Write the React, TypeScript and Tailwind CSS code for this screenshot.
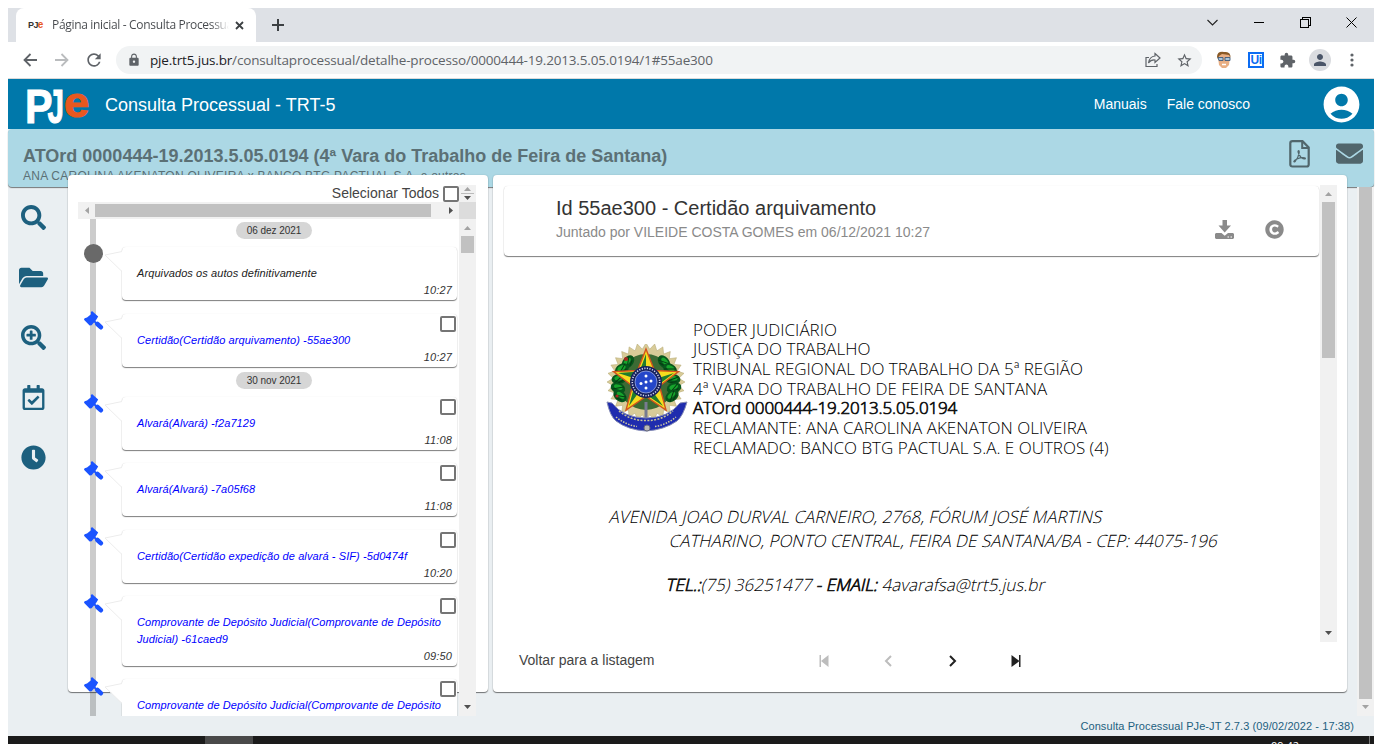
import React from "react";
import {
  FaSearch, FaFolderOpen, FaSearchPlus, FaRegCalendarCheck, FaClock,
  FaCopyright, FaEnvelope,
} from "react-icons/fa";
import { MdAccountCircle, MdLock, MdExtension, MdPerson, MdStarBorder, MdRefresh } from "react-icons/md";

const arial = "font-['Liberation_Sans',Arial,sans-serif]";
const segoe = "font-['Open_Sans','Noto_Sans',sans-serif]";
const doc = "font-['Open_Sans',sans-serif]";

type Entry = { title: string; time: string; plain?: boolean; tall?: boolean };

const december: Entry[] = [
  { title: "Arquivados os autos definitivamente", time: "10:27", plain: true },
  { title: "Certidão(Certidão arquivamento) -55ae300", time: "10:27" },
];
const november: Entry[] = [
  { title: "Alvará(Alvará) -f2a7129", time: "11:08" },
  { title: "Alvará(Alvará) -7a05f68", time: "11:08" },
  { title: "Certidão(Certidão expedição de alvará - SIF) -5d0474f", time: "10:20" },
  { title: "Comprovante de Depósito Judicial(Comprovante de Depósito\nJudicial) -61caed9", time: "09:50", tall: true },
  { title: "Comprovante de Depósito Judicial(Comprovante de Depósito", time: "", tall: true },
];

function Arrow({ dir, dim = false }: { dir: "up" | "down" | "left" | "right"; dim?: boolean }) {
  const d = {
    up: "M0 4 L3.5 0 L7 4Z",
    down: "M0 0 L7 0 L3.5 4Z",
    left: "M4 0 L0 3.5 L4 7Z",
    right: "M0 0 L4 3.5 L0 7Z",
  }[dir];
  const vertical = dir === "up" || dir === "down";
  return (
    <svg width={vertical ? 7 : 4} height={vertical ? 4 : 7} className={dim ? "fill-[#a3a3a3]" : "fill-[#505050]"}>
      <path d={d} />
    </svg>
  );
}

function PjeLogo() {
  return (
    <svg width="66" height="50" viewBox="0 0 66 50" className="overflow-visible font-['Liberation_Sans',Arial,sans-serif] font-bold">
      <g transform="translate(-3 44.3) scale(0.86 1)">
        <text fontSize="48" fill="#fff" stroke="#fff" strokeWidth="1">P</text>
      </g>
      <g transform="translate(19.5 44.3) scale(0.62 1)">
        <text fontSize="48" fill="#fff" stroke="#fff" strokeWidth="1">J</text>
      </g>
      <g transform="translate(36 38) scale(1.03 0.98)">
        <text fontSize="44" fill="#e8581f" stroke="#e8581f" strokeWidth="1.2">e</text>
      </g>
    </svg>
  );
}

function TabStrip() {
  return (
    <div className="flex h-[34px] shrink-0 bg-[#dee1e6]">
      <div className="ml-2 flex w-60 items-center rounded-t-lg bg-white pl-3 pr-3">
        <span className="w-4 shrink-0 font-['Liberation_Sans',Arial,sans-serif] text-[9px] font-bold tracking-[-0.6px] text-[#333]">
          PJ<span className="text-[10px] text-[#e8581f]">e</span>
        </span>
        <span className={`${segoe} ml-2 w-[177px] overflow-hidden whitespace-nowrap bg-linear-to-r from-[#45484c] from-90% to-transparent bg-clip-text text-[12px] tracking-[-0.32px] text-transparent`}>
          Página inicial - Consulta Processual
        </span>
        <svg width="9" height="9" className="ml-[6px] shrink-0" stroke="#3c4043" strokeWidth="1.8"><path d="M1 1L8 8M8 1L1 8" /></svg>
      </div>
      <svg width="12" height="12" className="ml-4 mt-[11px]" stroke="#3c4043" strokeWidth="2"><path d="M6 0V12M0 6H12" /></svg>
      <div className="flex flex-1 justify-end pt-[8px] text-[#111]">
        <div className="flex h-3 items-center">
          <svg width="11" height="7" fill="none" stroke="#222" strokeWidth="1.1"><path d="M.5 1L5.5 6L10.5 1" /></svg>
          <svg width="10" height="2" className="ml-9"><path d="M0 1H10" stroke="#000" strokeWidth="1" shapeRendering="crispEdges" /></svg>
          <svg width="11" height="11" className="ml-9" fill="none" stroke="#000" shapeRendering="crispEdges"><path d="M.5 2.5H8.5V10.5H.5ZM2.5 2.5V.5H10.5V8.5H8.5" /></svg>
          <svg width="11" height="11" className="ml-[35px] mr-[17px]" stroke="#000"><path d="M.5 .5L10.5 10.5M10.5 .5L.5 10.5" /></svg>
        </div>
      </div>
    </div>
  );
}

function Toolbar() {
  return (
    <div className="flex h-[37px] shrink-0 items-center border-b border-[#dadada] bg-white pl-[15px] text-[#5f6368]">
      <svg width="14" height="14" fill="none" stroke="#5f6368" strokeWidth="1.8"><path d="M14 7H1.5M7.5 1L1.5 7L7.5 13" /></svg>
      <svg width="14" height="14" className="ml-[18px]" fill="none" stroke="#babcbe" strokeWidth="1.8"><path d="M0 7H12.5M6.5 1L12.5 7L6.5 13" /></svg>
      <MdRefresh className="ml-[15px] size-5" />
      <div className="ml-[12px] flex h-7 w-[1086px] items-center rounded-full bg-[#f1f3f4] pl-[11px] pr-[9px]">
        <MdLock className="size-[14px]" />
        <span className={`${segoe} ml-[9px] flex-1 whitespace-nowrap text-[13.5px] tracking-[-0.17px]`}>
          <span className="text-[#202124]">pje.trt5.jus.br</span>/consultaprocessual/detalhe-processo/0000444-19.2013.5.05.0194/1#55ae300
        </span>
        <svg width="16" height="16" fill="none" stroke="#5f6368" strokeWidth="1.2">
          <path d="M4 5.5H1V14.5H12V12M10 1.5L15 6L10 10.5V8Q6 7.5 3.5 11Q4.5 4.5 10 4Z" />
        </svg>
        <MdStarBorder className="ml-[15px] size-[17px]" />
      </div>
      <svg width="14" height="18" className="ml-[15px] shrink-0">
        <path d="M1 6Q1 1 7 1Q13 1 13 6L12 14L9 17H5L2 14Z" fill="#e8ae83" />
        <path d="M0 6Q0 0 7 1Q14 0 13.5 7L12 4L5 3L2 5L1 8Z" fill="#8a5a26" />
        <path d="M1 6.5H6V9.5H2ZM8 6.5H13V9.5H8Z" fill="#a9c6da" stroke="#3d5a7c" strokeWidth=".9" />
        <path d="M5 13.5H9" stroke="#fff" strokeWidth="1.5" />
      </svg>
      <span className={`${arial} ml-[17px] flex h-4 w-4 shrink-0 items-center justify-center border-2 border-[#0c6cf2] bg-white text-[12px] font-bold leading-none tracking-[-0.4px] text-[#0c6cf2]`}>Ui</span>
      <MdExtension className="ml-[15px] size-[17px] shrink-0" />
      <span className="ml-[13px] flex size-[22px] shrink-0 items-center justify-center rounded-full bg-[#dadce0]">
        <MdPerson className="size-[18px] text-[#4a5568]" />
      </span>
      <svg width="4" height="14" className="ml-[19px] shrink-0 fill-[#5f6368]"><circle cx="2" cy="2" r="1.6" /><circle cx="2" cy="7" r="1.6" /><circle cx="2" cy="12" r="1.6" /></svg>
    </div>
  );
}

function Checkbox() {
  return <span className="block size-4 rounded-[2px] border-2 border-[#757575] bg-white" />;
}

function Gavel() {
  return (
    <svg width="20" height="19" className="-ml-[0.5px] -mr-[0.5px] -mt-[2.5px]" fill="#1a53ff">
      <path d="M8 0L14.2 5.6L12.4 8.6L7.6 14.2L5.6 14.6L0 8.8L.6 7.2L3 6.6L7 3.2L6.8 1.2Z" />
      <path d="M9.5 9.5L12.5 12.5" stroke="#1a53ff" strokeWidth="1.8" />
      <path d="M13.4 13L16.8 16.2" stroke="#1a53ff" strokeWidth="4.6" strokeLinecap="round" />
    </svg>
  );
}

function FilePdf() {
  return (
    <svg width="21" height="28" className="mr-[26px] mt-[11px]" fill="none" stroke="#51666c">
      <path d="M3.5 1.2H13.5L19.7 7.5V24.5Q19.7 26.5 17.7 26.5H3.5Q1.3 26.5 1.3 24.5V3.2Q1.3 1.2 3.5 1.2Z" strokeWidth="2.2" />
      <path d="M13.2 1.5V8H19.5" strokeWidth="2" />
      <path d="M9.3 10.8Q10.4 10.4 10.2 12.6Q9.5 17 6.5 21Q5.2 22.6 4.8 21.6Q4.8 20.3 8 19Q12 17.3 15.5 17.8Q17 18.2 16 18.9Q14.8 19.4 12 17.2Q9.5 15 9.1 12.2Q8.8 11 9.3 10.8Z" strokeWidth="1.2" />
    </svg>
  );
}

function DatePill({ children }: { children: string }) {
  return (
    <div className="ml-[158px] flex h-[17px] w-[76px] items-center justify-center rounded-full bg-[#d6d6d6] text-[10px] tracking-[-0.05px] text-[#333]">
      {children}
    </div>
  );
}

function TimelineItem({ title, time, plain, tall }: Entry) {
  return (
    <div className="mb-[13.25px] flex items-start pl-[6px]">
      {plain ? <span className="-mt-[3px] size-[19px] rounded-full bg-[#696969]" /> : <Gavel />}
      <svg width="18" height="21" className="z-10 -mr-px ml-[2px] mt-[4px]">
        <path d="M17 0L0 4L17 20Z" fill="#fff" />
        <path d="M17 .5L0 4L17 20.5" fill="none" stroke="#ececec" />
      </svg>
      <div className={`relative w-[335px] rounded bg-white pt-[18px] text-[11px] italic leading-[17px] shadow-[0_1px_1px_rgba(0,0,0,0.5),0_0_1px_rgba(0,0,0,0.14)] ${tall ? "h-[69.75px]" : "h-[53.25px]"}`}>
        <p className={`whitespace-pre pl-[15px] tracking-[0.09px] ${plain ? "text-[#222]" : "text-[#0000ff]"}`}>{title}</p>
        <p className="pr-[5px] text-right text-[#333] tracking-[0.16px]">{time}</p>
        {!plain && <span className="absolute right-px top-[2.3px]"><Checkbox /></span>}
      </div>
    </div>
  );
}

function TimelinePanel() {
  return (
    <section className="h-[517px] w-[420px] shrink-0 rounded bg-white pl-[10px] pt-[10px] shadow-[0_1px_1px_rgba(0,0,0,0.5),0_0_2px_rgba(0,0,0,0.14)]">
      <div className="flex h-[17px] w-[398px] items-center">
        <span className="ml-auto mr-1 text-[14px] text-[#444]">Selecionar Todos</span>
        <span className="mt-px"><Checkbox /></span>
        <div className="flex h-[17px] w-[17px] flex-col items-center justify-center bg-[#f1f1f1]">
          <Arrow dir="up" dim />
          <span className="my-[2px] h-px w-[13px] bg-[#bbb]" />
          <Arrow dir="down" />
        </div>
      </div>
      <div className="flex h-[17px] w-[398px] bg-[#f1f1f1]">
        <span className="flex w-[17px] items-center justify-center"><Arrow dir="left" dim /></span>
        <span className="mt-[2px] h-[13px] w-[336px] bg-[#c1c1c1]" />
        <span className="flex flex-1 items-center justify-center pl-[11px]"><Arrow dir="right" /></span>
        <span className="w-[17px] bg-[#dcdcdc]" />
      </div>
      <div className="flex h-[497px] w-[398px] overflow-hidden">
        <div className="relative w-[381px]">
          <span className="absolute left-3 top-0 h-full w-[6px] bg-black/20" />
          <div className="relative pt-[3px]">
            <DatePill>06 dez 2021</DatePill>
            <div className="pt-[8px]">{december.map((e, i) => <TimelineItem key={i} {...e} />)}</div>
            <div className="-mt-[8px]"><DatePill>30 nov 2021</DatePill></div>
            <div className="pt-[7.5px]">{november.map((e, i) => <TimelineItem key={i} {...e} />)}</div>
          </div>
        </div>
        <div className="flex w-[17px] flex-col items-center bg-[#f1f1f1]">
          <span className="flex h-[17px] items-center"><Arrow dir="up" dim /></span>
          <span className="h-[17px] w-[13px] bg-[#c1c1c1]" />
          <span className="mb-[7px] mt-auto"><Arrow dir="down" /></span>
        </div>
      </div>
    </section>
  );
}

const leaves = [
  [-18, -20, -50], [-24, -13, -30], [-27, -3, -10], [-28, 6, 20], [-26, 14, 40],
  [18, -20, 50], [24, -13, 30], [27, -3, 10], [28, 6, -20], [26, 14, -40],
];

function CoatOfArms() {
  const rays = Array.from({ length: 56 }, (_, i) => {
    const r = i % 2 ? 33 : 39;
    const a = (i * Math.PI) / 28;
    return `${(Math.sin(a) * r).toFixed(1)},${(-Math.cos(a) * r).toFixed(1)}`;
  }).join(" ");
  return (
    <svg width="82" height="90" viewBox="-40 -38 82 90" className="shrink-0">
      <polygon points={rays} fill="#d8cb98" stroke="#b0a56c" strokeWidth=".5" />
      <circle r="28" fill="#3c6b34" />
      {leaves.map(([x, y, a], i) => (
        <g key={i} transform={`translate(${x} ${y}) rotate(${a})`}>
          <ellipse rx="7.5" ry="5.2" fill="#07571c" />
          <ellipse rx="4.5" ry="2.4" cy="-1" fill="#17a52c" />
          <path d="M-5 3L5 -3M-2 4L4 2" stroke="#063a12" />
        </g>
      ))}
      <circle cx="-20" cy="-23" r="2" fill="#a52a20" />
      <circle cx="-29" cy="14" r="1.6" fill="#a52a20" />
      <path d="M-1.5 20H1.5V44H-1.5Z" fill="#777b91" />
      <path d="M-39 20L-34 21Q-22 36 0 36Q22 36 34 21L41 20Q37 34 31 39Q18 48 0 49Q-18 48 -30 39Q-36 34 -39 20Z" fill="#1f2cae" stroke="#8289b5" />
      <path d="M-27 29Q-15 39 0 38.5Q15 39 27 29" stroke="#c7c49a" strokeWidth="1.5" strokeDasharray="2 1.4" fill="none" />
      <path d="M-30 35Q-20 43 -9 44.5M9 44.5Q20 43 30 35" stroke="#d3cda0" strokeWidth="1.5" strokeDasharray="1.5 1.3" fill="none" />
      <path d="M0 -33L8.4 -11.5L32.5 -10.5L13.5 4L20 28L0 14.5L-20 28L-13.5 4L-32.5 -10.5L-8.4 -11.5Z" fill="#f6dc1e" stroke="#d3541d" strokeWidth="1.4" />
      <path d="M0 -28V0L-6.5 -10.5ZM28 -9L0 0L11.5 3.5ZM17 24L0 0V12.5ZM-17 24L0 0L-11.5 3.5ZM-28 -9L0 0L-6.5 -10.5Z" fill="#207c2d" />
      <circle r="16" fill="#16205d" />
      <circle r="13.7" fill="none" stroke="#d5d8ed" strokeWidth="1.6" strokeDasharray="1.2 1.4" />
      <circle r="11" fill="#2446c9" stroke="#aeb9e8" strokeWidth=".7" />
      <g fill="#fff"><circle cy="-6" r="1.5" /><circle cy="0" r="1.5" /><circle cy="6" r="1.5" /><circle cx="-5" cy="1.5" r="1.5" /><circle cx="5" cy="-1" r="1.5" /></g>
      <circle cx="1" cy="46" r="3" fill="#b9b8b6" stroke="#686b7c" />
    </svg>
  );
}

function DocumentPanel() {
  return (
    <section className="ml-[5px] h-[517px] w-[854px] shrink-0 rounded bg-white pl-[10px] pt-[10px] shadow-[0_1px_1px_rgba(0,0,0,0.5),0_0_2px_rgba(0,0,0,0.14)]">
      <div className="flex h-[457px]">
        <div className="w-[817px] pt-px">
          <header className="ml-[1px] flex h-[70px] w-[815px] rounded pl-[52px] shadow-[0_1px_1px_rgba(0,0,0,0.5),0_0_1px_rgba(0,0,0,0.14)]">
            <div className="flex-1 pt-[9px]">
              <h1 className="text-[20px] leading-[26px] text-[#333]">Id 55ae300 - Certidão arquivamento</h1>
              <p className="mt-px text-[14px] leading-[21px] text-[#8a8a8a]">Juntado por VILEIDE COSTA GOMES em 06/12/2021 10:27</p>
            </div>
            <svg width="19" height="19" className="mr-[31px] mt-[34px]" fill="#8a8a8a">
              <path d="M7.5 0H12V5.5H16L9.7 12.5L3.5 5.5H7.5Z" />
              <path d="M1 13H6.5L9.7 15.7L13 13H18L19 14V18L18 19H1L0 18V14Z" />
              <path d="M12.5 17H14M15.5 17H17" stroke="#fff" strokeWidth="1.2" />
            </svg>
            <FaCopyright className="mr-[35px] mt-[34px] size-[19px] text-[#8a8a8a]" />
          </header>
          <article className={`${doc} text-[17px] font-light text-black`}>
            <div className="flex pl-[103px] pt-[63.5px]">
              <div className="pt-[24.5px]"><CoatOfArms /></div>
              <div className="whitespace-nowrap pl-[5px] leading-[19.7px]">
                <p>PODER JUDICIÁRIO</p>
                <p>JUSTIÇA DO TRABALHO</p>
                <p>TRIBUNAL REGIONAL DO TRABALHO DA 5ª REGIÃO</p>
                <p>4ª VARA DO TRABALHO DE FEIRA DE SANTANA</p>
                <p className="tracking-[-0.16px] text-[#111] [-webkit-text-stroke:0.7px_#111]">ATOrd 0000444-19.2013.5.05.0194</p>
                <p>RECLAMANTE: ANA CAROLINA AKENATON OLIVEIRA</p>
                <p>RECLAMADO: BANCO BTG PACTUAL S.A. E OUTROS (4)</p>
              </div>
            </div>
            <div className="whitespace-nowrap pt-[47.5px] leading-6">
              <p className="ml-[107px] w-max -skew-x-[13deg]">AVENIDA JOAO DURVAL CARNEIRO, 2768, FÓRUM JOSÉ MARTINS</p>
              <p className="ml-[167px] w-max -skew-x-[13deg]">CATHARINO, PONTO CENTRAL, FEIRA DE SANTANA/BA - CEP: 44075-196</p>
              <p className="ml-[164px] mt-[20px] w-max -skew-x-[13deg]">
                <b className="font-light [-webkit-text-stroke:0.7px_#111]">TEL.:</b>(75) 36251477 <b className="font-light [-webkit-text-stroke:0.7px_#111]">- EMAIL:</b> 4avarafsa@trt5.jus.br
              </p>
            </div>
          </article>
        </div>
        <div className="flex w-[17px] flex-col items-center bg-[#f1f1f1]">
          <span className="flex h-[17px] items-center"><Arrow dir="up" dim /></span>
          <span className="h-[156px] w-[13px] bg-[#c1c1c1]" />
          <span className="mb-[7px] mt-auto"><Arrow dir="down" /></span>
        </div>
      </div>
      <footer className="flex h-[37px] items-center pl-4">
        <span className="w-[300px] text-[14px] text-[#444]">Voltar para a listagem</span>
        <svg width="10" height="12" fill="#bdbdbd"><path d="M.5 0H2V12H.5ZM9.5 0V12L2 6Z" /></svg>
        <svg width="8" height="12" className="ml-[55px]" fill="none" stroke="#bdbdbd" strokeWidth="2"><path d="M7 1L2 6L7 11" /></svg>
        <svg width="8" height="12" className="ml-[57px]" fill="none" stroke="#222" strokeWidth="2"><path d="M1 1L6 6L1 11" /></svg>
        <svg width="10" height="12" className="ml-[54px]" fill="#222"><path d="M8 0H9.5V12H8ZM.5 0V12L8.5 6Z" /></svg>
      </footer>
    </section>
  );
}

export default function App() {
  return (
    <div className={`${arial} h-[744px] w-[1382px] overflow-hidden bg-white px-2 pt-2`}>
      <div className="flex h-[736px] flex-col bg-[#eaeff2]">
        <TabStrip />
        <Toolbar />
        <header className="flex h-[50px] shrink-0 items-center bg-[#0078aa] pl-5 pr-[11px] text-white">
          <PjeLogo />
          <span className="ml-[11px] mt-[3px] text-[18px]">Consulta Processual - TRT-5</span>
          <span className="ml-auto mr-5 text-[14px]">Manuais</span>
          <span className="mr-[70px] text-[14px]">Fale conosco</span>
          <MdAccountCircle className="size-[43px]" />
        </header>
        <header className="flex h-[58px] shrink-0 rounded bg-[#acd8e5] pl-[15px] text-[#51666c] shadow-[0_1px_1px_rgba(0,0,0,0.5)]">
          <div className="flex-1 whitespace-nowrap pt-[17px] text-[#5b7075]">
            <h2 className="text-[18px] font-bold leading-5">ATOrd 0000444-19.2013.5.05.0194 (4ª Vara do Trabalho de Feira de Santana)</h2>
            <p className="mt-px text-[12px] leading-[19px] tracking-[0.25px]">ANA CAROLINA AKENATON OLIVEIRA x BANCO BTG PACTUAL S.A. e outros</p>
          </div>
          <FilePdf />
          <FaEnvelope className="mr-[11px] mt-[11px] size-[27px]" />
        </header>
        <div className="flex h-[529px] shrink-0">
          <nav className="flex w-[60px] flex-col pl-[12.5px] pt-[17.5px] text-[#1d607f]">
            <FaSearch className="size-[25px]" />
            <FaFolderOpen className="-ml-[2px] mt-[33px] size-[29px]" />
            <FaSearchPlus className="mt-[33px] size-[25px]" />
            <FaRegCalendarCheck className="mt-[35px] size-[25px]" />
            <FaClock className="mt-[35px] size-[25px]" />
          </nav>
          <div className="relative -mt-3 flex flex-1">
            <TimelinePanel />
            <DocumentPanel />
          </div>
          <div className="flex w-[17px] flex-col items-center self-start h-[529px] bg-[#f1f1f1]">
            <span className="h-[512px] w-[13px] bg-[#c1c1c1]" />
            <span className="mb-[7px] mt-auto"><Arrow dir="down" dim /></span>
          </div>
        </div>
        <div className="flex h-5 shrink-0 items-center justify-end whitespace-nowrap pr-5 text-[11px] tracking-[0.09px] text-[#1d607f]">
          Consulta Processual PJe-JT 2.7.3 (09/02/2022 - 17:38)
        </div>
        <div className="flex h-2 shrink-0 overflow-hidden bg-[#1b1b1b]">
          <span className="ml-[197px] h-2 w-12 bg-[#494949]" />
          <span className={`${segoe} ml-auto mr-[70px] pt-[4px] text-[11px] leading-none text-white`}>09:42</span>
          <span className="mr-1 h-2 w-px bg-[#777]" />
        </div>
      </div>
    </div>
  );
}
